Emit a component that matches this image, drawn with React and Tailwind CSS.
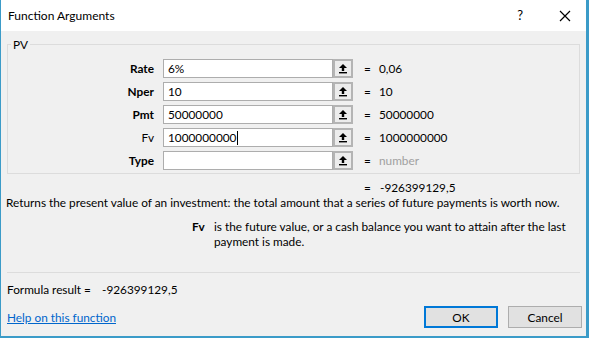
import React from 'react';

const font = { fontFamily: 'Lato, "Noto Sans", sans-serif' };

function RefButton() {
  return (
    <div className="flex h-[19px] w-[20px] shrink-0 items-center justify-center border-2 border-[#b4b4b4] bg-[#ececec]">
      <svg width="10" height="11" viewBox="0 0 10 11">
        <path d="M5 1 L9 5 H6.2 V8 H3.8 V5 H1 Z" fill="#000" />
        <rect x="1" y="9" width="8" height="1.4" fill="#000" />
      </svg>
    </div>
  );
}

function ArgRow({ label, bold = true, value, result, placeholder }) {
  return (
    <div className="flex h-[19px] items-center">
      <div className={`w-[155px] pr-[9px] text-right ${bold ? 'font-bold' : ''}`}>{label}</div>
      <div className="flex h-[19px] w-[170px] items-center border border-[#adadad] bg-white px-[4px]">
        {value}
      </div>
      <RefButton />
      <div className="ml-[11px] w-[15px]">=</div>
      <div className={placeholder ? 'text-[#a0a0a0]' : ''}>{result}</div>
    </div>
  );
}

export default function App() {
  return (
    <div
      className="flex h-[338px] w-[589px] flex-col overflow-hidden border-b-2 border-l border-r-[3px] border-[#3b9bc8] bg-[#f0f0f0] text-[11.8px] leading-[15px] text-black"
      style={font}
    >
      <div className="flex h-[31px] shrink-0 items-center bg-white pl-[7px]">
        <div className="flex-1 text-[12px]">Function Arguments</div>
        <div className="mr-[36px] text-[13px]">?</div>
        <svg width="12" height="12" viewBox="0 0 12 12" className="mr-[15px]">
          <path d="M1 1 L11 11 M11 1 L1 11" stroke="#000" strokeWidth="1.2" />
        </svg>
      </div>

      <div className="px-[6px] pt-[13px]">
        <div className="relative h-[130px] border border-[#dcdcdc]">
          <div className="absolute left-[3px] top-[-8px] bg-[#f0f0f0] px-[2px]">PV</div>
          <div className="flex flex-col gap-[4px] pt-[14px]">
            <ArgRow label="Rate" value="6%" result="0,06" />
            <ArgRow label="Nper" value="10" result="10" />
            <ArgRow label="Pmt" value="50000000" result="50000000" />
            <ArgRow
              label="Fv"
              bold={false}
              value={
                <span className="flex items-center">
                  1000000000<span className="ml-px inline-block h-[14px] w-px bg-black" />
                </span>
              }
              result="1000000000"
            />
            <ArgRow label="Type" value="" result="number" placeholder />
          </div>
        </div>
      </div>

      <div className="mt-[6px] flex pl-[363px]">
        <div className="w-[16px]">=</div>
        <div>-926399129,5</div>
      </div>
      <div className="pl-[5px] whitespace-nowrap">
        Returns the present value of an investment: the total amount that a series of future payments is worth now.
      </div>
      <div className="mt-[9px] flex pl-[191px]">
        <div className="w-[22px] font-bold">Fv</div>
        <div className="w-[360px]">
          is the future value, or a cash balance you want to attain after the last payment is made.
        </div>
      </div>

      <div className="mx-[6px] mt-[23px] border-t border-[#dcdcdc]" />

      <div className="mt-[9px] flex pl-[6px]">
        <div className="w-[95px]">Formula result =</div>
        <div>-926399129,5</div>
      </div>

      <div className="mt-[9px] flex items-center pl-[6px]">
        <a className="flex-1 text-[#0066cc] underline">Help on this function</a>
        <button className="h-[22px] w-[74px] border-2 border-[#0078d7] bg-[#e1e1e1]">OK</button>
        <button className="ml-[10px] mr-[4px] h-[22px] w-[74px] border border-[#adadad] bg-[#e1e1e1]">
          Cancel
        </button>
      </div>
    </div>
  );
}
